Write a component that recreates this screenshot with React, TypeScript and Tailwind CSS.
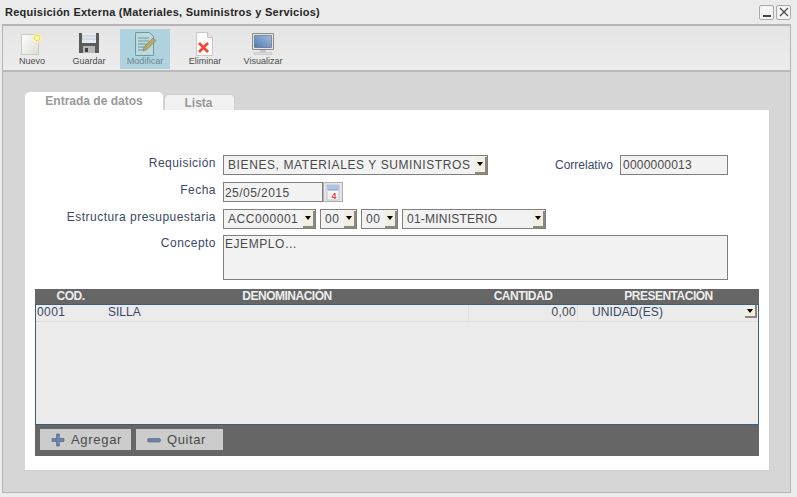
import type { ReactNode } from 'react';

const font = { fontFamily: '"Liberation Sans", Arial, sans-serif' };

function NewIcon() {
    return (
        <svg width="24" height="24" viewBox="0 0 24 24">
            <defs>
                <linearGradient id="newPage" x1="0" y1="0" x2="1" y2="1">
                    <stop offset="0" stopColor="#ffffff" />
                    <stop offset="1" stopColor="#dcdcd8" />
                </linearGradient>
            </defs>
            <path d="M1.500 2.500h15l2 3v17h-17z" fill="url(#newPage)" stroke="#c8c8c4" />
            <circle cx="17" cy="6" r="5" fill="#fbf59a" opacity="0.6" />
            <circle cx="17" cy="6" r="2.600" fill="#fdfbd0" stroke="#e4dc50" />
        </svg>
    );
}

function SaveIcon() {
    return (
        <svg width="24" height="24" viewBox="0 0 24 24">
            <path d="M2 1h20v20H2z" fill="#5a5a5a" />
            <path d="M5 1h14v10H5z" fill="#e6ebef" />
            <path d="M5 4h14M5 7h14" stroke="#b4c8d8" />
            <path d="M6 14h12v7H6z" fill="#b5b5b5" />
            <path d="M8 16h3v4H8z" fill="#444" />
        </svg>
    );
}

function EditIcon() {
    return (
        <svg width="24" height="24" viewBox="0 0 24 24">
            <path d="M2.500 0.500h14l4 4v19h-18z" fill="#bdd9df" stroke="#6d9a9d" />
            <path d="M5 6h11M5 9h11M5 12h9M5 15h7M5 18h6" stroke="#6d9a9d" />
            <path d="M10 19l1-4L20 6l3 2.500-9 9z" fill="#b9a866" stroke="#7d7a50" strokeWidth="0.6" />
        </svg>
    );
}

function DeleteIcon() {
    return (
        <svg width="24" height="24" viewBox="0 0 24 24">
            <path d="M3.500 0.500h11l5 5v18h-16z" fill="#fbfbfb" stroke="#c8c8cc" />
            <path d="M14.500 0.500v5h5" fill="#e4e4e8" stroke="#c8c8cc" />
            <path d="M6 11l9 9M15 11l-9 9" stroke="#ec4a3c" strokeWidth="2.800" />
        </svg>
    );
}

function MonitorIcon() {
    return (
        <svg width="24" height="24" viewBox="0 0 24 24">
            <defs>
                <linearGradient id="screen" x1="0" y1="1" x2="1" y2="0">
                    <stop offset="0" stopColor="#4f7ab5" />
                    <stop offset="1" stopColor="#a5bddd" />
                </linearGradient>
            </defs>
            <path d="M1.500 1.500h21v16h-21z" fill="#e4e4e4" stroke="#8b8b8b" />
            <path d="M3.500 3.500h17v12h-17z" fill="url(#screen)" stroke="#55606e" strokeWidth="0.6" />
            <path d="M9 18h6v2H9z" fill="#c4c4c4" />
            <path d="M3 20.500h18v2H3z" fill="#dadada" stroke="#bbbbbb" strokeWidth="0.5" />
        </svg>
    );
}

function CalendarIcon() {
    return (
        <svg width="16" height="17" viewBox="0 0 16 17">
            <path d="M2 1h12v15H2z" fill="#f4f4f6" stroke="#c0c4cc" />
            <path d="M2 1h12v5H2z" fill="#a8c4e6" />
            <path d="M3 6h10" stroke="#7f9fcc" />
            <text x="9" y="14.500" textAnchor="middle" fontSize="9" fontWeight="700" fill="#e84a4a" style={font}>
                4
            </text>
        </svg>
    );
}

function ToolButton({ icon, label, active, className }: { icon: ReactNode; label: string; active?: boolean; className?: string }) {
    return (
        <div className={`flex h-10 w-[50px] flex-col items-center ${active ? 'bg-[#aed3df] text-[#6f8790]' : 'text-[#4a4a4a]'} ${className ?? ''}`}>
            <div className="mt-[3px] h-[23px] w-6">{icon}</div>
            <span className="whitespace-nowrap text-[9px] leading-[12px]">{label}</span>
        </div>
    );
}

function ArrowBox({ small }: { small?: boolean }) {
    return (
        <span className={`flex shrink-0 items-center justify-center border-r-2 border-b-2 border-r-[#8a8a7c] border-b-[#8a8a7c] bg-[#f1eee2] ${small ? 'h-[13px] w-[12px]' : 'h-[17px] w-[12px]'}`}>
            <span className="h-0 w-0 border-x-[3px] border-t-[4px] border-x-transparent border-t-black" />
        </span>
    );
}

function SelectBox({ value, width, tracking }: { value: string; width: string; tracking: string }) {
    return (
        <div className={`flex h-5 items-center justify-between border border-[#7f7f7f] bg-[#f2f2f2] pl-[4px] text-[12px] text-[#4a4a4a] ${width} ${tracking}`}>
            <span className="whitespace-nowrap">{value}</span>
            <ArrowBox />
        </div>
    );
}

function FieldLabel({ children }: { children: ReactNode }) {
    return <div className="w-[181px] shrink-0 pt-[1px] text-right text-[12px] leading-[14px] tracking-[0.47px] whitespace-nowrap text-[#3a4866]">{children}</div>;
}

export default function App() {
    return (
        <div className="flex h-[497px] w-[797px] flex-col overflow-hidden bg-[#ebebeb]" style={font}>
            {/* Title */}
            <div className="flex h-6 shrink-0 items-center justify-between pr-[6px] pl-[5px]">
                <span className="text-[11px] font-bold tracking-[0.25px] text-[#262626]">Requisición Externa (Materiales, Suministros y Servicios)</span>
                <div className="flex gap-[2px]">
                    <button className="flex h-[15px] w-[15px] items-end justify-center rounded-[2px] border border-[#aaaaaa] bg-[#f4f4f4] pb-[2px]">
                        <span className="h-[2px] w-2 bg-[#444444]" />
                    </button>
                    <button className="flex h-[15px] w-[15px] items-center justify-center rounded-[2px] border border-[#aaaaaa] bg-[#f4f4f4]">
                        <svg width="10" height="10" viewBox="0 0 10 10">
                            <path d="M1 1l8 8M9 1l-8 8" stroke="#444444" strokeWidth="1.100" />
                        </svg>
                    </button>
                </div>
            </div>

            {/* Window body */}
            <div className="mr-[6px] mb-[4px] ml-[2px] flex flex-1 flex-col border border-t-2 border-[#b9b4b4] bg-[#d6d6d6]">
                {/* Toolbar */}
                <div className="flex h-[46px] shrink-0 border-b-2 border-b-[#bdb8b8] bg-gradient-to-b from-[#e5e5e5] to-[#ececec] pt-[3px] pl-[4px]">
                    <ToolButton icon={<NewIcon />} label="Nuevo" />
                    <ToolButton icon={<SaveIcon />} label="Guardar" className="ml-[7px]" />
                    <ToolButton icon={<EditIcon />} label="Modificar" active className="ml-[6px]" />
                    <ToolButton icon={<DeleteIcon />} label="Eliminar" className="ml-[10px]" />
                    <ToolButton icon={<MonitorIcon />} label="Visualizar" className="ml-[8px]" />
                </div>

                <div className="flex flex-1 flex-col pt-[21px] pr-[21px] pb-[22px] pl-[22px]">
                    {/* Tabs */}
                    <div className="flex h-[17px] shrink-0 items-end">
                        <div className="flex h-[18px] w-[138px] justify-center rounded-t-[5px] bg-white text-[12px] leading-[18px] font-bold text-[#999999]">Entrada de datos</div>
                        <div className="ml-[1px] flex h-[16px] w-[71px] justify-center rounded-t-[5px] border border-b-0 border-[#cfcfcf] bg-[#f2f2f2] pr-[2px] text-[12px] leading-[17px] font-bold text-[#999999]">Lista</div>
                    </div>

                    {/* Panel */}
                    <div className="flex flex-1 flex-col bg-white px-[10px] pt-[45px] shadow-[1px_1px_0_#cfcfcf]">
                        <div className="flex h-5 items-start">
                            <FieldLabel>Requisición</FieldLabel>
                            <div className="ml-[7px]">
                                <SelectBox value="BIENES, MATERIALES Y SUMINISTROS" width="w-[265px]" tracking="tracking-[0.6px]" />
                            </div>
                            <div className="ml-[67px] text-[12px] leading-[20px] text-[#3a4866]">Correlativo</div>
                            <div className="ml-[7px] h-5 w-[108px] border border-[#7f7f7f] bg-[#f2f2f2] pl-[2px] text-[12px] leading-[19px] tracking-[0.2px] text-[#4a4a4a]">0000000013</div>
                        </div>

                        <div className="mt-[7px] flex h-5 items-start">
                            <FieldLabel>Fecha</FieldLabel>
                            <div className="ml-[7px] h-5 w-[100px] border border-[#7f7f7f] bg-[#f2f2f2] pl-[1px] text-[12px] leading-[20px] tracking-[0.45px] text-[#4a4a4a]">25/05/2015</div>
                            <div className="flex h-5 w-5 items-center justify-center border border-[#b0b0b0] bg-[#e4e4e4]">
                                <CalendarIcon />
                            </div>
                        </div>

                        <div className="mt-[7px] flex h-5 items-start">
                            <FieldLabel>Estructura presupuestaria</FieldLabel>
                            <div className="ml-[7px] flex gap-[4px]">
                                <SelectBox value="ACC000001" width="w-[93px]" tracking="tracking-[0.55px]" />
                                <SelectBox value="00" width="w-[37px]" tracking="tracking-[0.55px]" />
                                <SelectBox value="00" width="w-[37px]" tracking="tracking-[0.55px]" />
                                <SelectBox value="01-MINISTERIO" width="w-[144px]" tracking="tracking-[0.23px]" />
                            </div>
                        </div>

                        <div className="mt-[6px] flex items-start">
                            <FieldLabel>Concepto</FieldLabel>
                            <div className="ml-[7px] h-[45px] w-[505px] border border-[#7f7f7f] bg-[#f2f2f2] pl-[1px] text-[12px] leading-[15px] tracking-[0.55px] text-[#4a4a4a]">
                                <div className="mt-[1px]">EJEMPLO…</div>
                            </div>
                        </div>

                        {/* Grid */}
                        <div className="mt-[9px] flex w-[724px] flex-col">
                            <div className="flex h-[15px] items-center bg-[#666666] text-[12px] leading-[15px] font-bold tracking-[-0.5px] text-[#eeeeee]">
                                <div className="w-[71px] text-center">COD.</div>
                                <div className="w-[362px] text-center">DENOMINACIÓN</div>
                                <div className="w-[110px] text-center">CANTIDAD</div>
                                <div className="flex-1 text-center">PRESENTACIÓN</div>
                            </div>
                            <div className="h-[120px] border-x border-t border-x-[#3f5f78] border-t-[#3f5f78] bg-[#ebebeb]">
                                <div className="flex h-[17px] border-b border-[#dfdfdf] text-[12px] leading-[15px] text-[#3a4866]">
                                    <div className="w-[72px] pl-[1px] tracking-[0.4px]">0001</div>
                                    <div className="w-[361px] border-r border-[#dfdfdf]">SILLA</div>
                                    <div className="w-[109px] border-r border-[#dfdfdf] pr-[1px] text-right tracking-[0.3px] text-[#4a4a4a]">0,00</div>
                                    <div className="flex flex-1 items-start justify-between pr-[1px] pl-[14px] tracking-[0.1px]">
                                        <span>UNIDAD(ES)</span>
                                        <ArrowBox small />
                                    </div>
                                </div>
                            </div>
                            <div className="flex h-[32px] items-start gap-[5px] border-t border-t-[#3f5f78] bg-[#666666] pt-[4px] pl-[5px]">
                                <div className="flex h-[21px] w-[91px] items-center bg-[#cccccc] pl-[11px] text-[13px] tracking-[0.7px] text-[#4a4a4a]">
                                    <svg width="14" height="14" viewBox="0 0 14 14">
                                        <path d="M5.500 1h3v4.500H13v3H8.500V13h-3V8.500H1v-3h4.500z" fill="#6f82a8" stroke="#4f5f80" strokeWidth="0.6" />
                                    </svg>
                                    <span className="ml-[6px]">Agregar</span>
                                </div>
                                <div className="flex h-[21px] w-[87px] items-center bg-[#cccccc] pl-[11px] text-[13px] tracking-[0.6px] text-[#4a4a4a]">
                                    <svg width="14" height="14" viewBox="0 0 14 14">
                                        <rect x="0.500" y="5.500" width="13" height="3.500" rx="1.500" fill="#6f82a8" stroke="#4f5f80" strokeWidth="0.6" />
                                    </svg>
                                    <span className="ml-[6px]">Quitar</span>
                                </div>
                            </div>
                        </div>
                    </div>
                </div>
            </div>
        </div>
    );
}
